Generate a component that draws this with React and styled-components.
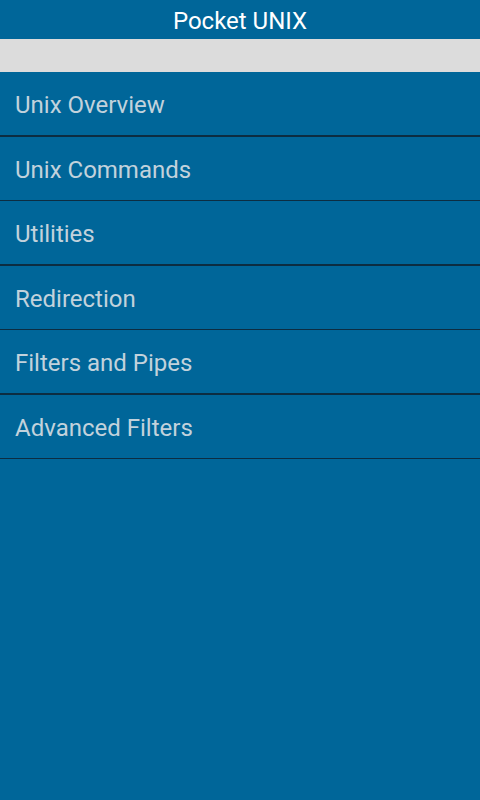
import React from "react";
import styled, { createGlobalStyle } from "styled-components";

const Global = createGlobalStyle`
  html, body { margin: 0; padding: 0; background: #006699; }
  body { font-family: Roboto, "Noto Sans", sans-serif; }
`;

const Screen = styled.div`
  width: 480px;
  height: 800px;
  background: #006699;
  display: flex;
  flex-direction: column;
`;

const Header = styled.header`
  height: 39px;
  display: flex;
  align-items: center;
  justify-content: center;
  color: #ffffff;
  font-size: 24px;
  padding-top: 2px;
  box-sizing: border-box;
`;

const SearchBar = styled.div`
  height: 33px;
  background: #dcdcdc;
`;

const List = styled.ul`
  list-style: none;
  margin: 0;
  padding: 0;
`;

const Item = styled.li`
  height: 63px;
  display: flex;
  align-items: center;
  padding-left: 15px;
  padding-top: 3px;
  box-sizing: border-box;
  color: #c2d2dc;
  font-size: 24px;
  border-bottom: ${(p) => (p.$thick ? 2 : 1)}px solid #0c2d42;
  height: ${(p) => (p.$thick ? 65 : 64)}px;
`;

const items = [
  "Unix Overview",
  "Unix Commands",
  "Utilities",
  "Redirection",
  "Filters and Pipes",
  "Advanced Filters",
];

export default function App() {
  return (
    <Screen>
      <Global />
      <Header>Pocket UNIX</Header>
      <SearchBar />
      <List>
        {items.map((t, i) => (
          <Item key={t} $thick={i % 2 === 0}>{t}</Item>
        ))}
      </List>
    </Screen>
  );
}
